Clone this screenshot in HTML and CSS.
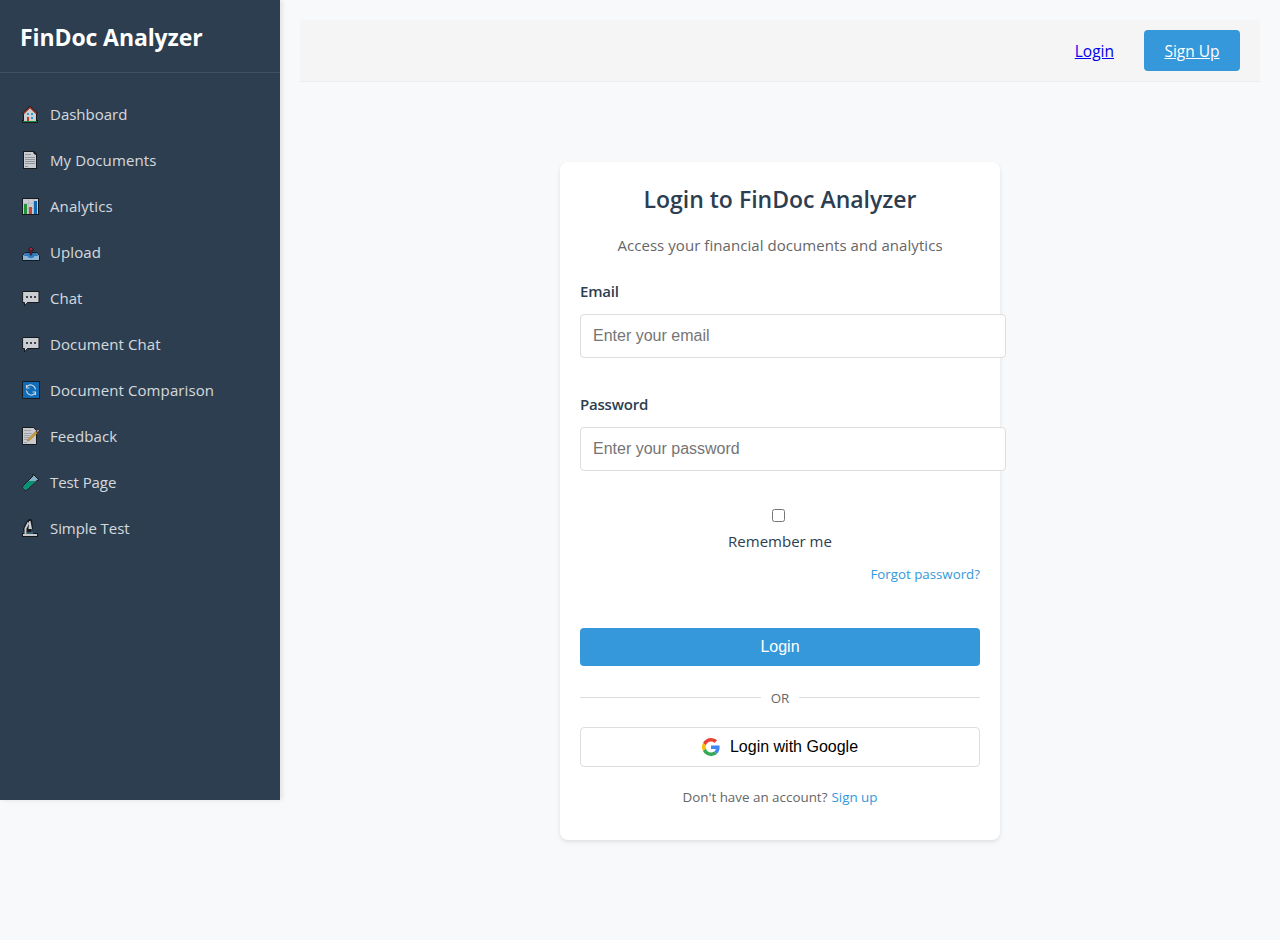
FILE: index.html
```html
<!DOCTYPE html>
<html lang="en">
<head>
<meta charset="utf-8">
<title>FinDoc Analyzer - Login</title>
<link rel="stylesheet" href="styles.css">
</head>
<body>
<div class="app">
  <aside class="sidebar">
    <div class="brand"><span class="brand-name">FinDoc Analyzer</span></div>
    <nav class="nav">
      <a class="nav-item"><svg class="nav-icon" viewBox="0 0 18 18"><path d="M0 18v-3h1V9L0 8l8-7 8 7-1 1v6h1v3z" fill="#111"/><path d="M2 9l6-6 6 6v7H2z" fill="#f3f4f6"/><path d="M1.500 8.500L8 2.500l6.500 6" fill="none" stroke="#d83b24" stroke-width="1.200"/><path d="M5 8h2v2H5zM9 8h2v2H9zM9 12h2v2H9z" fill="#30b5e8"/><path d="M5 12h2v4H5z" fill="#dc3626"/><path d="M1 16h14v1H1z" fill="#16a329"/></svg><span>Dashboard</span></a>
      <a class="nav-item"><svg class="nav-icon" viewBox="0 0 18 18"><path d="M1 0h11l3 3v15H1z" fill="#111"/><path d="M2 1h9l1 2 2 1v13H2z" fill="#f0f0f0"/><path d="M3 3.500h6M3 6.500h10M3 8.500h10M3 10.500h10M3 12.500h10M3 15.500h3" stroke="#aaa"/></svg><span class="wide">My Documents</span></a>
      <a class="nav-item"><svg class="nav-icon" viewBox="0 0 18 18"><path d="M0 1h17v17H0z" fill="#111"/><path d="M1 2h15v15H1z" fill="#f3f0f4"/><path d="M1 6.500h15M1 11.500h15M6.500 2v15M11.500 2v15" stroke="#ccc" stroke-width=".6"/><path d="M2 7h3v10H2z" fill="#20a831"/><path d="M7 10h3v7H7z" fill="#ec4b2b"/><path d="M12 4h3v13h-3z" fill="#0873cf"/></svg><span class="wide">Analytics</span></a>
      <a class="nav-item"><svg class="nav-icon" viewBox="0 0 18 18"><path d="M3 9.500h12l2.500 3v5H.5v-5z" fill="#a8d5f5" stroke="#111" stroke-linejoin="round"/><path d="M3.500 10h11l2 3h-4c-1 3-6 3-7 0h-4z" fill="#3589d8"/><path d="M9 4l3 3h-2.200v5H8.200V7H6z" fill="#e51431" stroke="#111" stroke-width=".8"/></svg><span class="wide">Upload</span></a>
      <a class="nav-item"><svg class="nav-icon" viewBox="0 0 18 18"><path d="M1 2.500h16v11H5.500L2.500 17v-3.500H.6V3z" fill="#f3f4f6" stroke="#111" stroke-linejoin="round"/><path d="M4 7h2v2H4zM8 7h2v2H8zM12 7h2v2h-2z" fill="#444"/></svg><span>Chat</span></a>
      <a class="nav-item"><svg class="nav-icon" viewBox="0 0 18 18"><path d="M1 2.500h16v11H5.500L2.500 17v-3.500H.6V3z" fill="#f3f4f6" stroke="#111" stroke-linejoin="round"/><path d="M4 7h2v2H4zM8 7h2v2H8zM12 7h2v2h-2z" fill="#444"/></svg><span class="wide">Document Chat</span></a>
      <a class="nav-item"><svg class="nav-icon" viewBox="0 0 18 18"><path d="M.5.500h17v17H.5z" fill="#0878d4" stroke="#111"/><path d="M5 5.500C8 2.500 13 4 13.500 8.500M13 12.500C10 15.500 5 14 4.500 9.500M4.500 4v3h3M13.500 14v-3h-3" fill="none" stroke="#f5f9ff" stroke-width="1.100"/></svg><span class="wide">Document Comparison</span></a>
      <a class="nav-item"><svg class="nav-icon" viewBox="0 0 18 18"><path d="M.5.500h11l3 3v14H.5z" fill="#f1eeee" stroke="#111"/><path d="M2 3.500h7M2 6.500h8M2 8.500h6M2 10.500h5M2 12.500h4M2 15.500h3" stroke="#bbb"/><path d="M5 14l1-2 8-8 2 1.500-8.500 8z" fill="#efb530" stroke="#735525" stroke-width=".3"/><path d="M14 4l2-2 1.500 1.500-2 2.500z" fill="#e59b89" stroke="#111" stroke-width=".6"/></svg><span class="wide">Feedback</span></a>
      <a class="nav-item"><svg class="nav-icon" viewBox="0 0 18 18"><path d="M11 1l6 6-2 .5L6 16c-3 3-7-1-4-4l9-9z" fill="#9dcce5" stroke="#111"/><path d="M6.500 8H14l-8 7.500c-2.500 2.500-6-.8-3.500-3.500z" fill="#00a67c"/></svg><span class="narrow">Test Page</span></a>
      <a class="nav-item"><svg class="nav-icon" viewBox="0 0 18 18"><path d="M1 14h1l-1-4 2-5 2-3 2-2h2l1 1 1 9H9v4h7v4H0v-4z" fill="#111"/><path d="M1 15h14v2H1z" fill="#eee"/><path d="M3.500 15V9.500l3-6" fill="none" stroke="#eee" stroke-width="2"/><path d="M7 2h1.500l1.500 8H6.500z" fill="#f4f4f4"/><path d="M5 14h6" stroke="#59bdd0"/></svg><span class="narrow">Simple Test</span></a>
    </nav>
  </aside>
  <main class="main">
    <header class="topbar">
      <a class="login-link" href="#">Login</a>
      <a class="signup-button" href="#">Sign Up</a>
    </header>
    <section class="card">
      <h2 class="title">Login to FinDoc Analyzer</h2>
      <p class="subtitle">Access your financial documents and analytics</p>
      <form class="form">
        <label class="label" for="email">Email</label>
        <input class="input" id="email" type="email" placeholder="Enter your email">
        <label class="label" for="password">Password</label>
        <input class="input" id="password" type="password" placeholder="Enter your password">
        <input class="check" id="remember" type="checkbox">
        <label class="remember" for="remember">Remember me</label>
        <a class="forgot">Forgot password?</a>
        <button class="submit" type="button">Login</button>
      </form>
      <div class="divider">OR</div>
      <button class="google" type="button"><svg class="google-icon" viewBox="0 0 48 48"><path fill="#EA4335" d="M24 9.500c3.540 0 6.710 1.220 9.210 3.600l6.850-6.850C35.900 2.380 30.470 0 24 0 14.620 0 6.510 5.380 2.560 13.220l7.980 6.190C12.430 13.720 17.740 9.500 24 9.500z"/><path fill="#4285F4" d="M46.980 24.550c0-1.570-.15-3.090-.38-4.550H24v9.020h12.940c-.58 2.960-2.260 5.480-4.780 7.180l7.730 6c4.510-4.180 7.090-10.360 7.090-17.650z"/><path fill="#FBBC05" d="M10.530 28.590c-.48-1.450-.76-2.990-.76-4.590s.27-3.140.76-4.590l-7.980-6.190C.92 16.460 0 20.120 0 24s.92 7.540 2.560 10.780l7.970-6.190z"/><path fill="#34A853" d="M24 48c6.480 0 11.930-2.130 15.890-5.810l-7.730-6c-2.150 1.450-4.920 2.300-8.160 2.300-6.260 0-11.570-4.220-13.470-9.910l-7.980 6.190C6.510 42.620 14.620 48 24 48z"/></svg>Login with Google</button>
      <p class="footer"><span>Don't have an account?</span><a class="footer-link">Sign up</a></p>
    </section>
  </main>
</div>
</body>
</html>
```
FILE: styles.css
```css
* { box-sizing: border-box; }
body {
  margin: 0;
  background: #f8f9fb;
  color: #2c3e50;
  font-family: "Open Sans", "Noto Sans", sans-serif;
  font-size: 15px;
}
.app { display: flex; align-items: flex-start; height: 940px; }
.sidebar {
  width: 280px;
  height: 800px;
  flex: none;
  background: #2c3e50;
  box-shadow: 2px 0 5px rgba(0, 0, 0, .1);
}
.brand {
  height: 73px;
  padding: 20px;
  border-bottom: 1px solid rgba(255, 255, 255, .1);
  color: #fff;
  font-size: 23px;
  font-weight: 700;
  line-height: 35px;
}
.brand-name { letter-spacing: -.1px; }
.nav { padding-top: 18px; }
.nav-item {
  display: flex;
  align-items: center;
  gap: 10px;
  height: 46px;
  padding-left: 22px;
  color: #fff;
  opacity: .8;
  white-space: nowrap;
}
.nav-icon { width: 18px; height: 18px; flex: none; }
.wide { letter-spacing: .1px; }
.narrow { letter-spacing: -.08px; }
.main { flex: 1; padding: 20px; }
.topbar {
  display: flex;
  align-items: center;
  justify-content: flex-end;
  gap: 30px;
  height: 62px;
  padding: 0 20px;
  background: #f5f5f5;
  border-bottom: 1px solid #eee;
}
.login-link { color: #00e; font-size: 15.500px; }
.signup-button {
  width: 96px;
  height: 41px;
  border-radius: 4px;
  background: #3498db;
  color: #fff;
  font-size: 15.500px;
  line-height: 42px;
  text-align: center;
}
.card {
  width: 440px;
  height: 678px;
  margin: 80px auto 0;
  padding: 20px;
  border-radius: 8px;
  background: #fff;
  box-shadow: 0 2px 4px rgba(0, 0, 0, .1);
}
.title { height: 36px; margin: 0; font-size: 23px; font-weight: 600; line-height: 34px; text-align: center; }
.subtitle { height: 26px; margin: 14px 0 21px; color: #666; letter-spacing: .06px; line-height: 26px; text-align: center; }
.form { display: flex; flex-direction: column; }
.label { height: 24px; margin-bottom: 11px; font-weight: 600; letter-spacing: -.2px; line-height: 24px; }
.input {
  width: 426px;
  height: 44px;
  margin: 0 0 34px;
  padding: 0 12px;
  border: 1px solid #ddd;
  border-radius: 4px;
  font: 16px "Liberation Sans", sans-serif;
}
.check { width: 13px; height: 13px; margin: 4px 195px 7px 192px; }
.remember { height: 24px; line-height: 24px; text-align: center; }
.forgot { height: 22px; margin: 10px 0 43px; color: #3498db; font-size: 13.300px; line-height: 22px; text-align: right; }
.submit {
  height: 38px;
  border: 0;
  border-radius: 4px;
  background: #3498db;
  color: #fff;
  font: 16px "Liberation Sans", sans-serif;
}
.divider { display: flex; align-items: center; gap: 10px; height: 22px; margin: 21px 0 18px; color: #666; font-size: 13.300px; }
.divider::before, .divider::after { content: ""; flex: 1; height: 1px; margin-bottom: 1px; background: #ddd; }
.google {
  display: flex;
  align-items: center;
  justify-content: center;
  gap: 10px;
  width: 400px;
  height: 40px;
  padding: 0;
  border: 1px solid #ddd;
  border-radius: 4px;
  background: #fff;
  color: #000;
  font: 16px "Liberation Sans", sans-serif;
}
.google-icon { width: 18px; height: 18px; }
.footer { display: flex; justify-content: center; gap: 4px; margin: 19px 0 0; color: #666; font-size: 13.400px; line-height: 22px; }
.footer-link { color: #3498db; }
```
